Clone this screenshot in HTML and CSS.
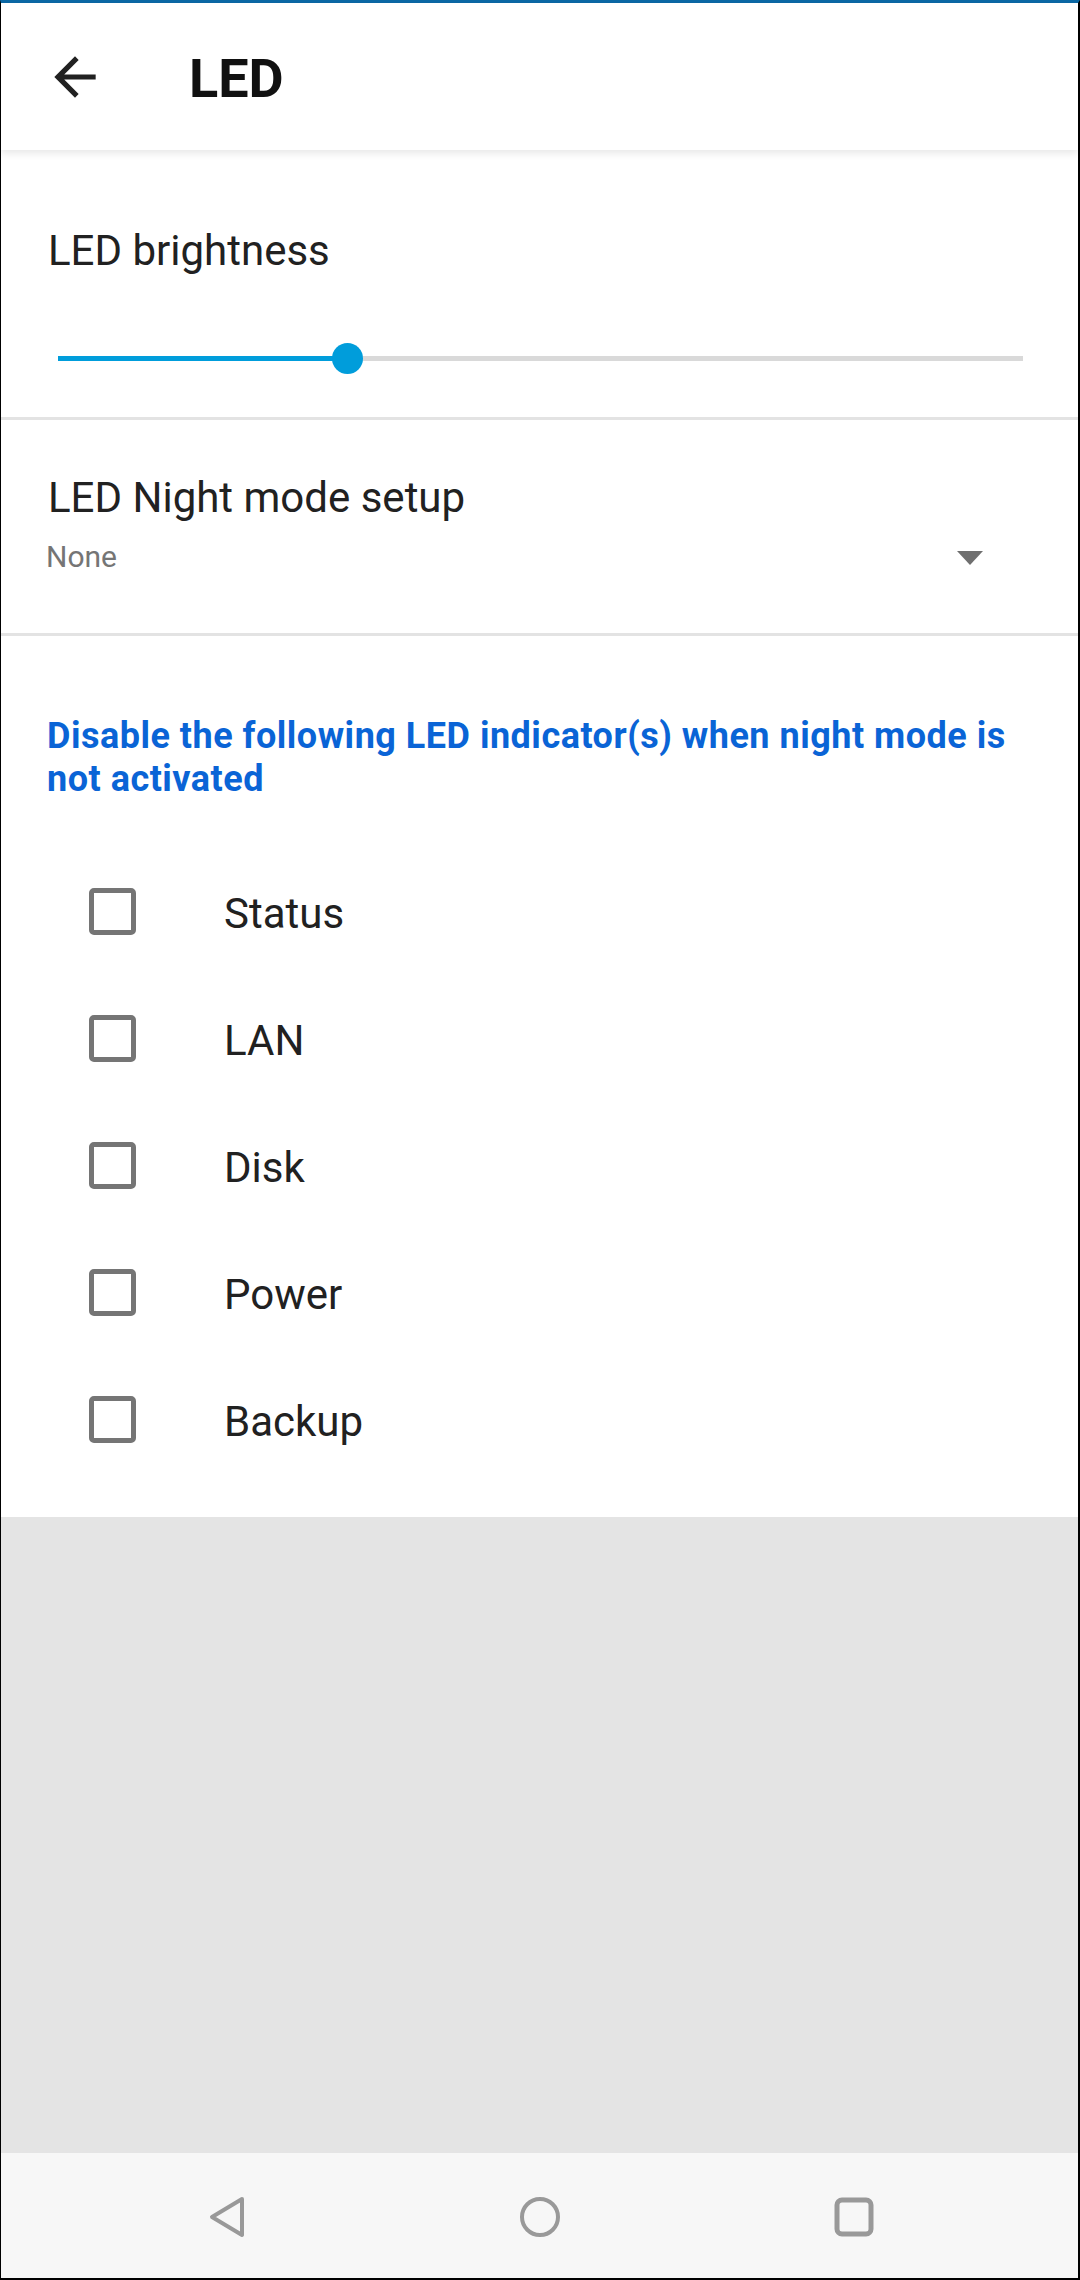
FILE: index.html
```html
<!DOCTYPE html>
<html lang="en">
<head>
    <meta charset="UTF-8">
    <meta name="viewport" content="width=device-width, initial-scale=1.0">
    <title>LED</title>

    <link rel="stylesheet" href="styles.css">
</head>
<body>

    <div class="screen">

        <header class="app-bar">
            <svg class="back-icon" viewBox="0 0 24 24" width="62" height="62">
                <path d="M20 11H7.83l5.59-5.59L12 4l-8 8 8 8 1.41-1.41L7.83 13H20v-2z" fill="#212121"/>
            </svg>
            <h1 class="title">LED</h1>
        </header>

        <!-- Brillo -->
        <section class="setting brightness">
            <div class="setting-label">LED brightness</div>
            <div class="slider">
                <div class="slider-track">
                    <div class="slider-fill" style="width: 30%"></div>
                    <div class="slider-thumb" style="left: 30%"></div>
                </div>
            </div>
        </section>

        <!-- Modo noche -->
        <section class="setting night-mode">
            <div class="setting-label">LED Night mode setup</div>
            <div class="select-row">
                <span class="select-value">None</span>
                <span class="select-arrow"></span>
            </div>
        </section>

        <section class="setting indicators">
            <p class="hint">Disable the following LED indicator(s) when night mode is not activated</p>

            <div class="check-list">
                <label class="check-row"><span class="checkbox"></span><span class="check-label">Status</span></label>
                <label class="check-row"><span class="checkbox"></span><span class="check-label">LAN</span></label>
                <label class="check-row"><span class="checkbox"></span><span class="check-label">Disk</span></label>
                <label class="check-row"><span class="checkbox"></span><span class="check-label">Power</span></label>
                <label class="check-row"><span class="checkbox"></span><span class="check-label">Backup</span></label>
            </div>
        </section>

        <div class="empty-area"></div>

        <nav class="nav-bar">
            <svg class="nav-icon" viewBox="0 0 40 44" width="40" height="44">
                <path d="M34 4 L4 22 L34 40 Z" fill="none" stroke="#999" stroke-width="4" stroke-linejoin="round"/>
            </svg>
            <svg class="nav-icon" viewBox="0 0 44 44" width="44" height="44">
                <circle cx="22" cy="22" r="18" fill="none" stroke="#999" stroke-width="4"/>
            </svg>
            <svg class="nav-icon" viewBox="0 0 44 44" width="44" height="44">
                <rect x="5" y="5" width="34" height="34" rx="5" fill="none" stroke="#999" stroke-width="5"/>
            </svg>
        </nav>

    </div>

</body>
</html>
```

FILE: styles.css
```css
body {
    margin: 0;
    padding: 0;
    font-family: Roboto, "Noto Sans", Arial, sans-serif;
    color: #212121;
    background: #fff;
}

.screen {
    width: 1080px;
    height: 2280px;
    box-sizing: border-box;
    border-top: 3px solid #0b69a6;
    border-left: 1px solid #000;
    border-right: 2px solid #000;
    border-bottom: 2px solid #000;
    display: flex;
    flex-direction: column;
}

/* Barra superior */
.app-bar {
    height: 147px;
    display: flex;
    align-items: center;
    padding-left: 43px;
    background: #fff;
    box-shadow: 0 3px 8px rgba(0, 0, 0, 0.1);
    position: relative;
    z-index: 2;
    flex-shrink: 0;
}

.back-icon {
    display: block;
}

.title {
    margin: 5px 0 0 83px;
    font-size: 54px;
    line-height: 62px;
    font-weight: 700;
    color: #111;
}

/* Secciones */
.setting {
    padding-left: 47px;
    padding-right: 44px;
    border-bottom: 3px solid #e3e3e3;
    flex-shrink: 0;
    box-sizing: border-box;
}

.setting-label {
    font-size: 42px;
    line-height: 50px;
    color: #212121;
}

.brightness {
    height: 270px;
    padding-top: 76px;
}

.slider {
    height: 46px;
    margin-top: 59px;
    display: flex;
    align-items: center;
    padding-left: 10px;
    padding-right: 11px;
}

.slider-track {
    position: relative;
    flex: 1;
    height: 5px;
    background: #d9d9d9;
}

.slider-fill {
    height: 100%;
    background: #009ddb;
}

.slider-thumb {
    position: absolute;
    top: 50%;
    width: 31px;
    height: 31px;
    margin: -15.5px 0 0 -15.5px;
    border-radius: 50%;
    background: #009ddb;
}

.night-mode {
    height: 216px;
    padding-top: 53px;
}

.select-row {
    margin-top: 16px;
    display: flex;
    align-items: center;
    justify-content: space-between;
    padding-right: 51px;
}

.select-value {
    font-size: 30px;
    line-height: 36px;
    color: #757575;
    margin-left: -2px;
}

.select-arrow {
    width: 0;
    height: 0;
    border-left: 13px solid transparent;
    border-right: 13px solid transparent;
    border-top: 14px solid #6f6f6f;
    margin-top: 2px;
}

.indicators {
    border-bottom: none;
    padding-top: 79px;
    padding-bottom: 34px;
    padding-left: 46px;
}

.hint {
    margin: 0;
    font-size: 36px;
    line-height: 43px;
    font-weight: 700;
    letter-spacing: 0.5px;
    color: #0a64d6;
}

.check-list {
    margin-top: 47px;
    display: flex;
    flex-direction: column;
}

.check-row {
    height: 127px;
    display: flex;
    align-items: center;
    padding-left: 42px;
}

.checkbox {
    width: 47px;
    height: 47px;
    box-sizing: border-box;
    border: 5px solid #757575;
    border-radius: 5px;
    flex-shrink: 0;
}

.check-label {
    margin-left: 88px;
    margin-top: 4px;
    font-size: 42px;
    line-height: 50px;
    color: #212121;
}

.empty-area {
    flex: 1;
    background: #e4e4e4;
}

/* Barra de navegacion */
.nav-bar {
    height: 125px;
    flex-shrink: 0;
    background: #f7f7f7;
    display: flex;
    align-items: center;
    justify-content: center;
    gap: 270px;
    padding-top: 2px;
    padding-left: 4px;
    box-sizing: border-box;
}

.nav-icon {
    display: block;
}
```
